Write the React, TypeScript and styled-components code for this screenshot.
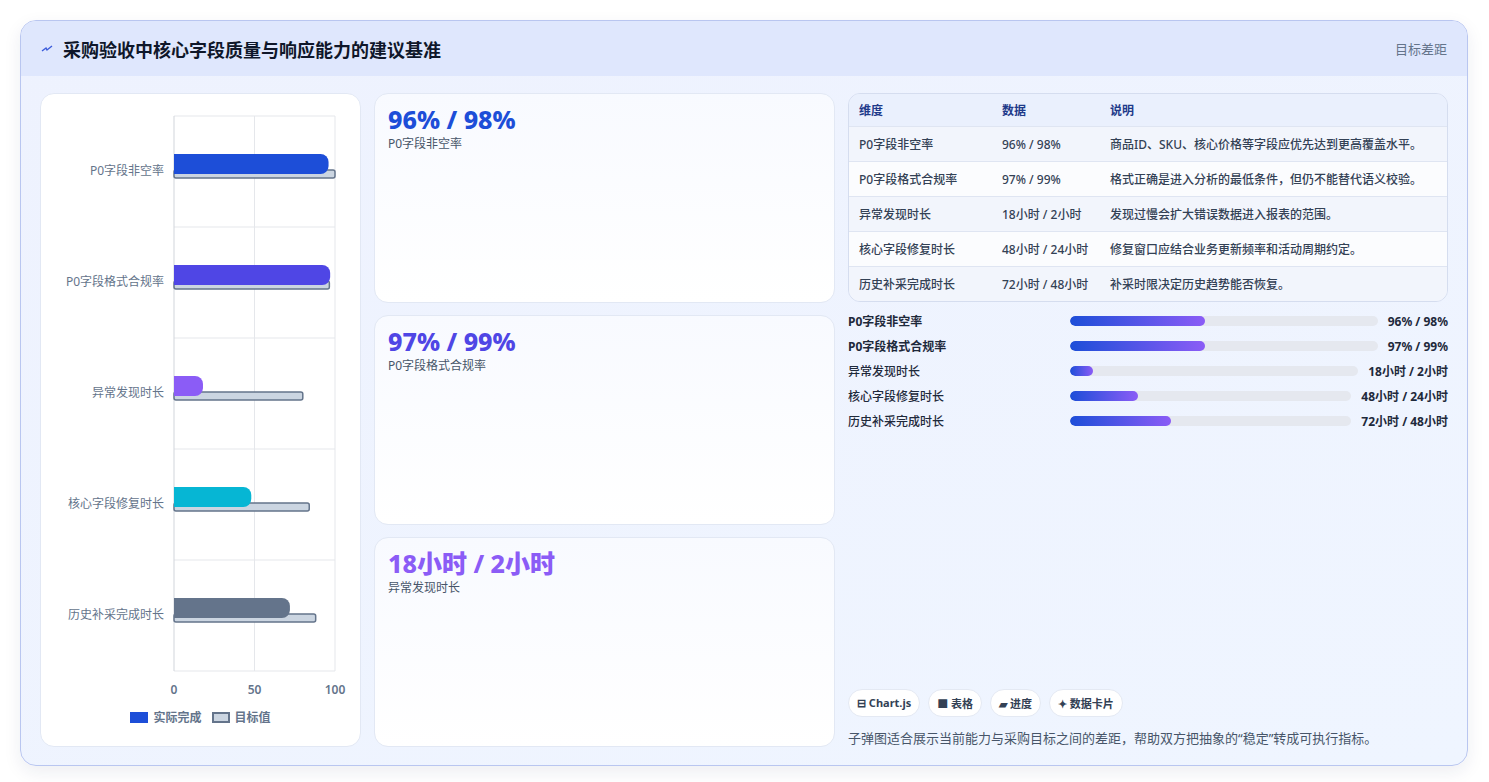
import React from 'react';
import styled, { createGlobalStyle } from 'styled-components';

const Global = createGlobalStyle`
  body { margin: 0; background: #ffffff; font-family: "Noto Sans", "Noto Sans CJK SC", sans-serif; }
`;

const Page = styled.div`
  padding: 20px 21px 18px 20px;
  height: 782px;
  box-sizing: border-box;
`;

const Panel = styled.div`
  height: 100%;
  border: 1px solid #b9c6f0;
  border-radius: 16px;
  overflow: hidden;
  background: linear-gradient(160deg, #eef2fe 0%, #eff5ff 100%);
  box-shadow: 0 6px 18px rgba(30, 41, 90, 0.08);
  display: flex;
  flex-direction: column;
`;

const Header = styled.div`
  height: 55px;
  flex: none;
  background: #dfe7fd;
  display: flex;
  align-items: center;
  justify-content: space-between;
  padding: 0 20px;
`;

const Title = styled.h1`
  margin: 0;
  font-size: 18px;
  font-weight: 700;
  color: #0f172a;
  display: flex;
  align-items: center;
  gap: 10px;
`;

const HeaderNote = styled.span`
  font-size: 13px;
  color: #64748b;
`;

const Body = styled.div`
  flex: 1;
  display: grid;
  grid-template-columns: 321px 461px 1fr;
  gap: 13px;
  padding: 17px 19px 18px 19px;
  min-height: 0;
`;

const Card = styled.div`
  background: linear-gradient(180deg, #f8faff 0%, #ffffff 100%);
  border: 1px solid #e2e8f4;
  border-radius: 14px;
`;

const ChartCard = styled(Card)`
  background: #fff;
  display: flex;
  flex-direction: column;
  align-items: center;
`;

const Legend = styled.div`
  display: flex;
  gap: 10px;
  font-size: 12px;
  color: #64748b;
  font-weight: 600;
  margin-top: 2px;
`;

const LegendItem = styled.span`
  display: flex;
  align-items: center;
  gap: 5px;
`;

const Swatch = styled.span<{ $bg: string; $border: string }>`
  width: 18px;
  height: 11px;
  background: ${p => p.$bg};
  border: 2px solid ${p => p.$border};
  box-sizing: border-box;
`;

const Stack = styled.div`
  display: grid;
  grid-template-rows: repeat(3, 1fr);
  gap: 12px;
`;

const StatCard = styled(Card)`
  padding: 10px 13px;
`;

const StatValue = styled.div<{ $color: string }>`
  font-size: 25px;
  font-weight: 800;
  color: ${p => p.$color};
  line-height: 1.2;
`;

const StatLabel = styled.div`
  font-size: 12px;
  color: #475569;
  margin-top: 0;
`;

const Right = styled.div`
  display: flex;
  flex-direction: column;
  min-height: 0;
`;

const Table = styled.div`
  border: 1px solid #d5ddef;
  border-radius: 12px;
  overflow: hidden;
  font-size: 12px;
`;

const Row = styled.div<{ $head?: boolean; $alt?: boolean }>`
  display: grid;
  grid-template-columns: 143px 108px 1fr;
  height: ${p => (p.$head ? 32 : 34)}px;
  align-items: center;
  padding-left: 10px;
  color: ${p => (p.$head ? '#1e3a8a' : '#334155')};
  font-weight: ${p => (p.$head ? 700 : 500)};
  background: ${p => (p.$head ? '#eaf0fd' : p.$alt ? '#fbfcfe' : '#f2f5fc')};
  border-top: ${p => (p.$head ? 'none' : '1px solid #dfe5f2')};
`;

const Progress = styled.div`
  display: flex;
  flex-direction: column;
  gap: 7px;
  margin-top: 10px;
`;

const PRow = styled.div`
  display: flex;
  align-items: center;
  gap: 10px;
  font-size: 12px;
  color: #1e293b;
  height: 18px;
`;

const PLabel = styled.span<{ $bold?: boolean }>`
  width: 212px;
  font-weight: ${p => (p.$bold ? 700 : 500)};
`;

const Track = styled.div`
  flex: 1;
  height: 10px;
  border-radius: 5px;
  background: #e5e8ef;
  overflow: hidden;
`;

const Fill = styled.div`
  height: 100%;
  border-radius: 5px;
  background: linear-gradient(90deg, #1d4ed8, #8b5cf6);
`;

const PValue = styled.span`
  font-weight: 700;
  white-space: nowrap;
`;

const Spacer = styled.div`
  flex: 1;
`;

const Chips = styled.div`
  display: flex;
  gap: 8px;
`;

const Chip = styled.span`
  background: #fff;
  border: 1px solid #e4e9f3;
  border-radius: 14px;
  padding: 5px 8px;
  font-size: 11px;
  font-weight: 700;
  color: #334155;
`;

const Caption = styled.p`
  margin: 11px 0 0;
  font-size: 13px;
  color: #475569;
`;

const items = [
  { name: 'P0字段非空率', actual: 96, target: 100, color: '#1d4ed8', text: '96% / 98%', desc: '商品ID、SKU、核心价格等字段应优先达到更高覆盖水平。', fill: 44 },
  { name: 'P0字段格式合规率', actual: 97, target: 96.5, color: '#4f46e5', text: '97% / 99%', desc: '格式正确是进入分析的最低条件，但仍不能替代语义校验。', fill: 44 },
  { name: '异常发现时长', actual: 18, target: 80, color: '#8b5cf6', text: '18小时 / 2小时', desc: '发现过慢会扩大错误数据进入报表的范围。', fill: 8 },
  { name: '核心字段修复时长', actual: 48, target: 84, color: '#06b6d4', text: '48小时 / 24小时', desc: '修复窗口应结合业务更新频率和活动周期约定。', fill: 24 },
  { name: '历史补采完成时长', actual: 72, target: 88, color: '#64748b', text: '72小时 / 48小时', desc: '补采时限决定历史趋势能否恢复。', fill: 36 },
];

const Chart = () => {
  const x0 = 133, w = 161, top = 22, step = 111;
  const sx = (v: number) => x0 + (w * v) / 100;
  return (
    <svg width="320" height="612" viewBox="0 0 320 612">
      {[0, 1, 2, 3, 4, 5].map(i => (
        <line key={i} x1={x0} x2={x0 + w} y1={top + i * step} y2={top + i * step} stroke="#e5e7eb" />
      ))}
      {[0, 50, 100].map(v => (
        <g key={v}>
          <line x1={sx(v)} x2={sx(v)} y1={top} y2={top + 5 * step} stroke={v === 0 ? '#d1d5db' : '#e5e7eb'} />
          <text x={sx(v)} y={top + 5 * step + 23} textAnchor="middle" fontSize="12" fontWeight="600" fill="#64748b">{v}</text>
        </g>
      ))}
      {items.map((it, i) => {
        const cy = top + i * step + 55;
        return (
          <g key={it.name}>
            <text x={x0 - 10} y={cy + 4} textAnchor="end" fontSize="12" fill="#64748b">{it.name}</text>
            <rect x={x0} y={cy - 1} width={sx(it.target) - x0} height={8} rx={2} fill="#cbd5e1" stroke="#64748b" strokeWidth="1.5" />
            <path d={`M${x0} ${cy - 17} H${sx(it.actual) - 8} a8 8 0 0 1 8 8 v4 a8 8 0 0 1 -8 8 H${x0} Z`} fill={it.color} />
          </g>
        );
      })}
    </svg>
  );
};

const App: React.FC = () => (
  <>
    <Global />
    <Page>
      <Panel>
        <Header>
          <Title>
            <svg width="12" height="8" viewBox="0 0 12 8">
              <path d="M1 6 L5 3 L6 5 L11 1" stroke="#3b5bdb" strokeWidth="1.4" fill="none" />
            </svg>
            采购验收中核心字段质量与响应能力的建议基准
          </Title>
          <HeaderNote>目标差距</HeaderNote>
        </Header>
        <Body>
          <ChartCard>
            <Chart />
            <Legend>
              <LegendItem><Swatch $bg="#1d4ed8" $border="#1d4ed8" />实际完成</LegendItem>
              <LegendItem><Swatch $bg="#cbd5e1" $border="#64748b" />目标值</LegendItem>
            </Legend>
          </ChartCard>
          <Stack>
            {items.slice(0, 3).map(it => (
              <StatCard key={it.name}>
                <StatValue $color={it.color}>{it.text}</StatValue>
                <StatLabel>{it.name}</StatLabel>
              </StatCard>
            ))}
          </Stack>
          <Right>
            <Table>
              <Row $head><span>维度</span><span>数据</span><span>说明</span></Row>
              {items.map((it, i) => (
                <Row key={it.name} $alt={i % 2 === 1}>
                  <span>{it.name}</span><span>{it.text}</span><span>{it.desc}</span>
                </Row>
              ))}
            </Table>
            <Progress>
              {items.map((it, i) => (
                <PRow key={it.name}>
                  <PLabel $bold={i < 2}>{it.name}</PLabel>
                  <Track><Fill style={{ width: `${it.fill}%` }} /></Track>
                  <PValue>{it.text}</PValue>
                </PRow>
              ))}
            </Progress>
            <Spacer />
            <Chips>
              <Chip>⊟ Chart.js</Chip>
              <Chip>■ 表格</Chip>
              <Chip>▰ 进度</Chip>
              <Chip>✦ 数据卡片</Chip>
            </Chips>
            <Caption>子弹图适合展示当前能力与采购目标之间的差距，帮助双方把抽象的“稳定”转成可执行指标。</Caption>
          </Right>
        </Body>
      </Panel>
    </Page>
  </>
);

export default App;
